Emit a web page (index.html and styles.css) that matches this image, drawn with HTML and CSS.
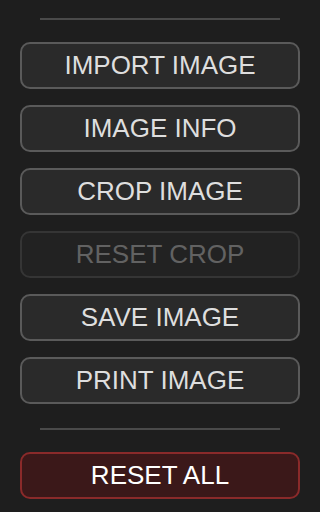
FILE: index.html
```html
<!DOCTYPE html>
<html>
<head>
<meta charset="utf-8">
<link rel="stylesheet" href="styles.css">
</head>
<body>
<div class="panel">
  <div class="sep"></div>
  <button class="btn">IMPORT IMAGE</button>
  <button class="btn">IMAGE INFO</button>
  <button class="btn">CROP IMAGE</button>
  <button class="btn" disabled>RESET CROP</button>
  <button class="btn">SAVE IMAGE</button>
  <button class="btn">PRINT IMAGE</button>
  <div class="sep lower"></div>
  <button class="btn danger">RESET ALL</button>
</div>
</body>
</html>
```
FILE: styles.css
```css
html, body {
  margin: 0;
  padding: 0;
  background: #1e1e1e;
  width: 320px;
  height: 512px;
  overflow: hidden;
}
.panel {
  display: flex;
  flex-direction: column;
  gap: 16px;
  padding: 13px 20px 0;
}
.sep {
  height: 2px;
  background: #4a4a4a;
  margin: 5px 20px 6px;
}
.sep.lower {
  margin-top: 8px;
}
.btn {
  box-sizing: border-box;
  height: 47px;
  flex: none;
  font-family: "Liberation Sans", Arial, sans-serif;
  font-size: 26px;
  line-height: 29px;
  color: #dedede;
  background: #2a2a2a;
  border: 2px solid #5a5a5a;
  border-radius: 10px;
  padding: 0;
  text-align: center;
  width: 100%;
}
.btn:disabled {
  background: #222222;
  border-color: #353535;
  color: #626262;
}
.btn.danger {
  background: #3b1819;
  border-color: #8a2a2a;
  color: #ffffff;
}
```
